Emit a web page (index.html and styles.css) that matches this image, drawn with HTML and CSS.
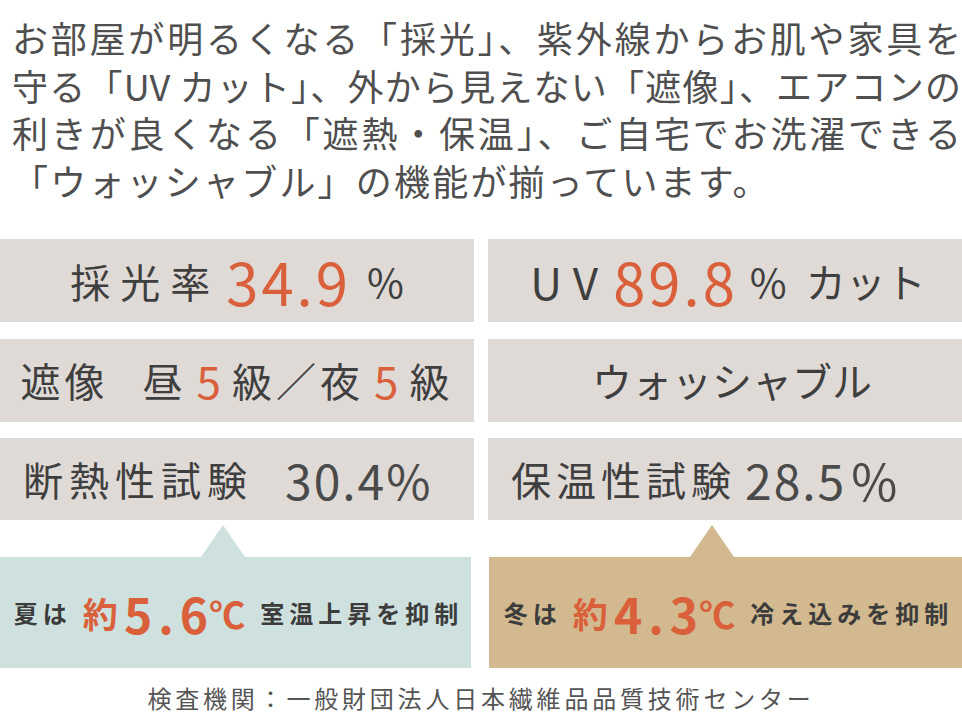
FILE: index.html
```html
<!DOCTYPE html>
<html lang="ja">
<head>
<meta charset="utf-8">
<title>機能</title>
<link rel="stylesheet" href="styles.css">
</head>
<body>
<main class="page">
  <div class="intro">
    <p class="line line-just">お部屋が明るくなる「採光」、紫外線からお肌や家具を</p>
    <p class="line line-just">守る「<span class="latin">UV</span> カット」、外から見えない「遮像」、エアコンの</p>
    <p class="line line-just">利きが良くなる「遮熱・保温」、ご自宅でお洗濯できる</p>
    <p class="line line-last">「ウォッシャブル」の機能が揃っています。</p>
  </div>

  <section class="specs">
    <div class="spec spec-center">
      <span class="t t-wide">採光率</span><span class="num num-xl n-l1">34.9</span><span class="t pct pct-l1">%</span>
    </div>
    <div class="spec spec-center spec-uv">
      <span class="t uv">UV</span><span class="num num-xl n-r1">89.8</span><span class="t pct pct-r1">%</span><span class="t cut">カット</span>
    </div>
    <div class="spec spec-center">
      <span class="t t-mid">遮像</span><span class="t t-mid day">昼</span><span class="num num-m">5</span><span class="t t-mid">級／夜</span><span class="num num-m">5</span><span class="t t-mid">級</span>
    </div>
    <div class="spec spec-center spec-wash">
      <span class="t">ウォッシャブル</span>
    </div>
    <div class="spec spec-left">
      <span class="t t-test">断熱性試験</span><span class="gnum n-l3">30.4%</span>
    </div>
    <div class="spec spec-left">
      <span class="t t-test2">保温性試験</span><span class="gnum n-r3">28.5</span><span class="gnum pct-r3">%</span>
    </div>
  </section>

  <section class="callouts">
    <div class="callout callout-summer">
      <span class="c-s">夏は</span><span class="c-yaku">約</span><span class="c-num"><span class="c-gap">5.</span>6</span><span class="c-deg">℃</span><span class="c-s c-tail">室温上昇を抑制</span>
    </div>
    <div class="callout callout-winter">
      <span class="c-s">冬は</span><span class="c-yaku">約</span><span class="c-num"><span class="c-gap">4.</span>3</span><span class="c-deg">℃</span><span class="c-s c-tail">冷え込みを抑制</span>
    </div>
  </section>

  <p class="footer">検査機関：一般財団法人日本繊維品品質技術センター</p>
</main>
</body>
</html>
```

FILE: styles.css
```css
html, body {
  margin: 0;
  padding: 0;
  background: #ffffff;
}

body {
  font-family: "Noto Sans CJK JP", "Noto Sans", sans-serif;
  color: #404040;
}

.page {
  width: 962px;
  height: 728px;
  overflow: hidden;
}

.intro {
  padding: 14px 0 0 12px;
  font-size: 36px;
  line-height: 47.5px;
  letter-spacing: 1px;
  color: #4f4f4f;
}

.line {
  margin: 0;
  white-space: nowrap;
}

.line-just {
  text-align: justify;
  text-align-last: justify;
}

.line-last {
  letter-spacing: 2.2px;
}

.intro .latin {
  letter-spacing: 0;
}

.specs {
  margin-top: 35px;
  display: grid;
  grid-template-columns: 474px 474px;
  grid-template-rows: 83px 83px 82px;
  column-gap: 14px;
  row-gap: 16.5px;
}

.spec {
  background: #dfdad6;
  display: flex;
  align-items: center;
  white-space: nowrap;
}

.spec span {
  line-height: 1;
}

.spec-center {
  justify-content: center;
}

.spec-uv {
  padding-left: 6px;
}

.t {
  font-size: 40px;
  color: #3f3f3f;
}

.num {
  color: #d9603a;
}

.num-xl {
  font-size: 58px;
  letter-spacing: 3px;
}

.t-wide {
  letter-spacing: 10px;
}

.n-l1 {
  margin-left: 6px;
}

.pct {
  font-size: 40px;
}

.pct-l1 {
  margin-left: 16px;
}

.uv {
  font-size: 44px;
  letter-spacing: 11px;
}

.n-r1 {
  margin-left: 4px;
}

.pct-r1 {
  margin-left: 12px;
}

.cut {
  margin-left: 19px;
  letter-spacing: 0;
}

.t-mid {
  letter-spacing: 4px;
}

.day {
  margin-left: 34px;
}

.num-m {
  font-size: 44px;
  margin: 0 11px 0 10px;
}

.spec-wash {
  padding-left: 14px;
}

.spec-left {
  justify-content: flex-start;
  padding-left: 23px;
}

.t-test {
  letter-spacing: 6px;
}

.t-test2 {
  letter-spacing: 5px;
}

.gnum {
  font-size: 48px;
  color: #4a4a4a;
  letter-spacing: 2px;
}

.n-l3 {
  margin-left: 32px;
}

.n-r3 {
  letter-spacing: 2px;
  margin-left: 9px;
}

.pct-r3 {
  font-size: 50px;
  margin-left: 5px;
}

.callouts {
  margin-top: 37px;
  display: grid;
  grid-template-columns: 471px 473px;
  column-gap: 18px;
}

.callout {
  position: relative;
  height: 111px;
  display: flex;
  align-items: center;
  justify-content: center;
  padding-left: 6px;
  font-weight: 700;
  white-space: nowrap;
  color: #3c3c3c;
}

.callout span {
  line-height: 1;
}

.callout::before {
  content: "";
  position: absolute;
  left: 201px;
  top: -32px;
  width: 0;
  height: 0;
  border-left: 22px solid transparent;
  border-right: 22px solid transparent;
  border-bottom: 32px solid #cfe1df;
}

.callout-summer {
  background: #cfe1df;
}

.callout-winter {
  background: #d3b98f;
}

.callout-winter::before {
  border-bottom-color: #d3b98f;
}

.c-s {
  font-size: 24px;
  letter-spacing: 5px;
}

.c-yaku {
  font-size: 35px;
  color: #d9603a;
  margin-left: 11px;
}

.c-num {
  font-size: 48px;
  color: #d9603a;
  margin-left: 6px;
}

.c-gap {
  letter-spacing: 6px;
}

.c-deg {
  font-size: 36px;
  color: #d9603a;
  margin-left: 1px;
}

.c-tail {
  margin-left: 15px;
}

.footer {
  margin: 15px 0 0 0;
  text-align: center;
  font-size: 24px;
  line-height: 30px;
  letter-spacing: 3.8px;
  color: #555555;
  white-space: nowrap;
}
```
